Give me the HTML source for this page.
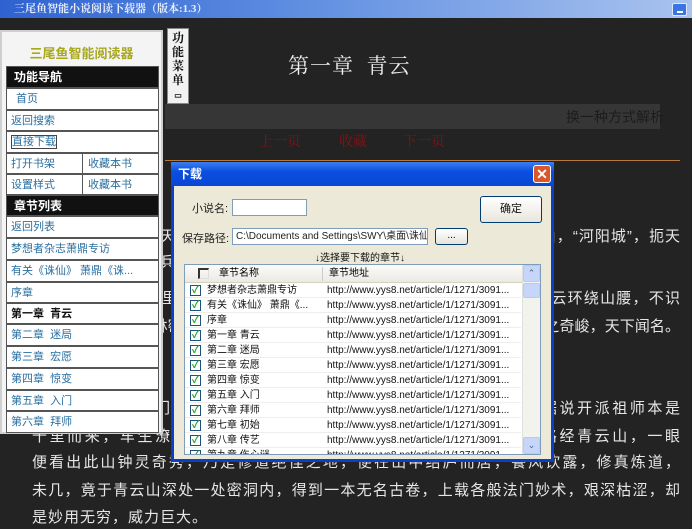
<!DOCTYPE html>
<html><head><meta charset="utf-8"><style>
*{margin:0;padding:0;box-sizing:border-box}
body{width:692px;height:527px;overflow:hidden;background:#232323;font-family:"Liberation Sans","Noto Sans CJK SC",sans-serif;position:relative}
.a{position:absolute}
.title{left:0;top:0;width:692px;height:18px;background:linear-gradient(90deg,#2f62d0,#5b8be0 40%,#a9c3ee);color:#e8eefc;font-size:11px;line-height:18px;padding-left:14px;font-family:"Liberation Serif","Noto Serif CJK SC",serif;font-weight:bold}
.line{left:32px;width:648px;color:#e6e6e6;font-size:15px;white-space:nowrap;overflow:hidden;text-align:justify;text-align-last:justify;height:22px;line-height:22px}
.panel{left:0;top:30px;width:163px;height:404px;background:#f4f4f4;border:2px solid #cfcfcf}
.row{position:absolute;left:4px;width:153px;background:#fff;border:1px solid #555;font-size:11px;color:#2a6fa0;line-height:20px;padding-left:4px;white-space:nowrap;overflow:hidden}
.hd{background:#111;color:#fff;font-weight:bold;font-size:12px;padding-left:7px}
.dlg{left:171px;top:162px;width:383px;height:300px;background:#ece9d8;border:3px solid #0a3fc8;border-top:none}
.dt{left:171px;top:162px;width:383px;height:24px;background:linear-gradient(#3b7ff0,#0a4fe0 40%,#0a46d6);color:#fff;font-size:12px;font-weight:bold;line-height:24px;padding-left:7px}
.lr{position:absolute;left:0;width:336px;height:15px;font-size:10px;line-height:15px;color:#111;border-bottom:1px solid #eee;white-space:nowrap}
.cb{position:absolute;left:5px;top:2px;width:11px;height:11px;border:1px solid #1c5180;background:#fff;color:#21a121;font-size:10px;line-height:9px;text-align:center;font-weight:bold}
</style></head><body>
<div class="a title">三尾鱼智能小说阅读下载器（版本:1.3）</div>
<div class="a" style="left:672px;top:3px;width:15px;height:13px;background:#3a74e0;border:1px solid #dfe8fa;border-radius:2px"><div style="margin:7px 0 0 4px;width:6px;height:2px;background:#fff"></div></div>

<div class="a" style="left:288px;top:50px;color:#f0f0f0;font-size:21px;font-family:'Liberation Serif','Noto Serif CJK SC',serif;letter-spacing:1px">第一章&nbsp;&nbsp;青云</div>
<div class="a" style="left:165px;top:104px;width:495px;height:25px;background:#363636"></div>
<div class="a" style="left:566px;top:107px;color:#1c1c1c;font-size:14px">换一种方式解析</div>
<div class="a" style="left:259px;top:131px;color:#8a1010;font-size:14px;font-family:'Liberation Serif','Noto Serif CJK SC',serif">上一页</div>
<div class="a" style="left:339px;top:131px;color:#8a1010;font-size:14px;font-family:'Liberation Serif','Noto Serif CJK SC',serif">收藏</div>
<div class="a" style="left:403px;top:131px;color:#8a1010;font-size:14px;font-family:'Liberation Serif','Noto Serif CJK SC',serif">下一页</div>
<div class="a" style="left:165px;top:160px;width:515px;height:1px;background:#b8783a"></div>

<div class="a line" style="top:226px">青云山脚下，乃是天下雄城之一，其城名曰“河阳城”，南临大江，北倚群山，“河阳城”，扼天</div>
<div class="a line" style="top:252px;text-align-last:left;letter-spacing:1px">下咽喉，自古便是兵家必争之地。城外十里，有青云山，高耸入云。</div>
<div class="a line" style="top:288px">里青云山脉连绵百里，峰峦起伏，最高有七峰，高耸入云，平日里只见白云环绕山腰，不识</div>
<div class="a line" style="top:316px">上真面目。青云山林密布，飞瀑奇岩，珍禽异兽，在所多有，景色幽静，七峰之奇峻，天下闻名。</div>
<div class="a line" style="top:398px">老人相传，青云门乃是天下正道魁首，门下弟子众多，源远流长，据说开派祖师本是</div>
<div class="a line" style="top:426px">千里而来，车生潦倒，一介落魄书生，四处游历，访仙求道，一日路经青云山，一眼</div>
<div class="a line" style="top:452px">便看出此山钟灵奇秀，乃是修道绝佳之地，便在山中结庐而居，餐风饮露，修真炼道，</div>
<div class="a line" style="top:480px">未几，竟于青云山深处一处密洞内，得到一本无名古卷，上载各般法门妙术，艰深枯涩，却</div>
<div class="a line" style="top:507px;text-align-last:left;letter-spacing:1px">是妙用无穷，威力巨大。</div>

<div class="a" style="left:167px;top:28px;width:22px;height:76px;background:#f2f2f2;border:1px solid #888;color:#111;font-size:12px;line-height:14px;text-align:center;padding-top:2px;font-weight:bold;font-family:'Liberation Serif','Noto Serif CJK SC',serif">功<br>能<br>菜<br>单<br><span style="font-size:8px">▭</span></div>

<div class="a panel">
<div style="position:absolute;left:0;top:11px;width:159px;text-align:center;color:#a8a820;font-size:13px;font-weight:bold">三尾鱼智能阅读器</div>
<div class="row hd" style="top:34px;height:22px">功能导航</div>
<div class="row" style="top:56px;height:22px;padding-left:9px">首页</div>
<div class="row" style="top:78px;height:21px">返回搜索</div>
<div class="row" style="top:99px;height:22px"><span style="border:1px solid #444">直接下载</span></div>
<div class="row" style="top:121px;height:21px;width:77px">打开书架</div>
<div class="row" style="top:121px;height:21px;left:80px;width:77px;padding-left:5px">收藏本书</div>
<div class="row" style="top:142px;height:21px;width:77px">设置样式</div>
<div class="row" style="top:142px;height:21px;left:80px;width:77px;padding-left:5px">收藏本书</div>
<div class="row hd" style="top:163px;height:21px">章节列表</div>
<div class="row" style="top:184px;height:22px">返回列表</div>
<div class="row" style="top:206px;height:22px">梦想者杂志萧鼎专访</div>
<div class="row" style="top:228px;height:22px">有关《诛仙》 萧鼎《诛...</div>
<div class="row" style="top:250px;height:21px">序章</div>
<div class="row" style="top:271px;height:21px;color:#111;font-weight:bold">第一章&nbsp; 青云</div>
<div class="row" style="top:292px;height:22px">第二章&nbsp; 迷局</div>
<div class="row" style="top:314px;height:22px">第三章&nbsp; 宏愿</div>
<div class="row" style="top:336px;height:22px">第四章&nbsp; 惊变</div>
<div class="row" style="top:358px;height:21px">第五章&nbsp; 入门</div>
<div class="row" style="top:379px;height:22px">第六章&nbsp; 拜师</div>
</div>

<div class="a dlg"></div>
<div class="a dt">下载</div>
<div class="a" style="left:533px;top:165px;width:18px;height:18px;background:#d8572c;border:1px solid #fff;border-radius:3px;color:#fff;font-size:14px;line-height:16px;text-align:center;font-weight:bold">✕</div>
<div class="a" style="left:192px;top:200px;font-size:11px;color:#222">小说名:</div>
<div class="a" style="left:232px;top:199px;width:75px;height:17px;background:#fff;border:1px solid #7f9db9"></div>
<div class="a" style="left:480px;top:196px;width:62px;height:27px;border:1px solid #003c74;border-radius:3px;background:linear-gradient(#fff,#e8e6dc);font-size:11px;text-align:center;line-height:25px;color:#111">确定</div>
<div class="a" style="left:182px;top:230px;font-size:11px;color:#222">保存路径:</div>
<div class="a" style="left:232px;top:228px;width:196px;height:17px;background:#fff;border:1px solid #7f9db9;font-size:10px;line-height:15px;padding-left:3px;white-space:nowrap;overflow:hidden;color:#222">C:\Documents and Settings\SWY\桌面\诛仙.txt</div>
<div class="a" style="left:435px;top:228px;width:33px;height:17px;border:1px solid #003c74;border-radius:3px;background:linear-gradient(#fff,#e6e4da);font-size:10px;text-align:center;line-height:13px">...</div>
<div class="a" style="left:315px;top:249px;font-size:10px;color:#111">↓选择要下载的章节↓</div>
<div class="a" style="left:184px;top:264px;width:357px;height:191px;background:#fff;border:1px solid #7f9db9;overflow:hidden">
 <div style="position:absolute;left:0;top:0;width:337px;height:18px;background:linear-gradient(#fbfbf9,#ebeae2);border-bottom:1px solid #d6d2c2;font-size:10px;line-height:18px">
  <div style="position:absolute;left:13px;top:3px;width:11px;height:11px;border-left:2px solid #333;border-top:2px solid #333;border-right:1px solid #ddd;border-bottom:1px solid #ddd"></div>
  <span style="position:absolute;left:34px">章节名称</span>
  <div style="position:absolute;left:137px;top:2px;width:1px;height:14px;background:#ccc"></div>
  <span style="position:absolute;left:144px">章节地址</span>
 </div>
 <div style="position:absolute;left:337px;top:0;width:18px;height:189px;background:#f3f3ee;border-left:1px solid #e0e0e0">
  <div style="height:17px;background:#c6d6fb;border:1px solid #b9c9ef;border-radius:2px;color:#4d6185;font-size:9px;text-align:center;line-height:15px">⌃</div>
  <div style="height:15px;background:#c6d6fb;border:1px solid #b9c9ef;border-radius:2px;margin-top:1px"></div>
  <div style="position:absolute;bottom:0;left:0;width:17px;height:17px;background:#c6d6fb;border:1px solid #b9c9ef;border-radius:2px;color:#4d6185;font-size:9px;text-align:center;line-height:15px">⌄</div>
 </div>
 <div style="position:absolute;left:0;top:18px;width:337px">
  <div class="lr" style="top:0"><div class="cb">✓</div><span style="position:absolute;left:22px">梦想者杂志萧鼎专访</span><span style="position:absolute;left:142px">http://www.yys8.net/article/1/1271/3091...</span></div>
  <div class="lr" style="top:15px"><div class="cb">✓</div><span style="position:absolute;left:22px">有关《诛仙》 萧鼎《...</span><span style="position:absolute;left:142px">http://www.yys8.net/article/1/1271/3091...</span></div>
  <div class="lr" style="top:30px"><div class="cb">✓</div><span style="position:absolute;left:22px">序章</span><span style="position:absolute;left:142px">http://www.yys8.net/article/1/1271/3091...</span></div>
  <div class="lr" style="top:45px"><div class="cb">✓</div><span style="position:absolute;left:22px">第一章 青云</span><span style="position:absolute;left:142px">http://www.yys8.net/article/1/1271/3091...</span></div>
  <div class="lr" style="top:60px"><div class="cb">✓</div><span style="position:absolute;left:22px">第二章 迷局</span><span style="position:absolute;left:142px">http://www.yys8.net/article/1/1271/3091...</span></div>
  <div class="lr" style="top:75px"><div class="cb">✓</div><span style="position:absolute;left:22px">第三章 宏愿</span><span style="position:absolute;left:142px">http://www.yys8.net/article/1/1271/3091...</span></div>
  <div class="lr" style="top:90px"><div class="cb">✓</div><span style="position:absolute;left:22px">第四章 惊变</span><span style="position:absolute;left:142px">http://www.yys8.net/article/1/1271/3091...</span></div>
  <div class="lr" style="top:105px"><div class="cb">✓</div><span style="position:absolute;left:22px">第五章 入门</span><span style="position:absolute;left:142px">http://www.yys8.net/article/1/1271/3091...</span></div>
  <div class="lr" style="top:120px"><div class="cb">✓</div><span style="position:absolute;left:22px">第六章 拜师</span><span style="position:absolute;left:142px">http://www.yys8.net/article/1/1271/3091...</span></div>
  <div class="lr" style="top:135px"><div class="cb">✓</div><span style="position:absolute;left:22px">第七章 初始</span><span style="position:absolute;left:142px">http://www.yys8.net/article/1/1271/3091...</span></div>
  <div class="lr" style="top:150px"><div class="cb">✓</div><span style="position:absolute;left:22px">第八章 传艺</span><span style="position:absolute;left:142px">http://www.yys8.net/article/1/1271/3091...</span></div>
  <div class="lr" style="top:165px"><div class="cb">✓</div><span style="position:absolute;left:22px">第九章 伤心谜</span><span style="position:absolute;left:142px">http://www.yys8.net/article/1/1271/3091...</span></div>
 </div>
</div>
</body></html>
